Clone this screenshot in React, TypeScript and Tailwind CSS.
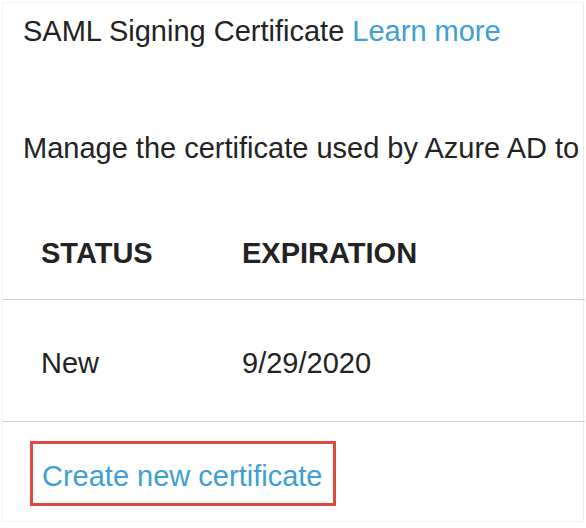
export default function App() {
  return (
    <div className="w-[586px] h-[528px] bg-white overflow-hidden font-['Liberation_Sans',Arial,sans-serif] text-[#232323]">
      <div className="h-[520px] ml-[2px] mt-[2px] mr-[2px] border border-[#f2f2f2] border-r-[#ececec]">
        <div className="pt-[12px] pl-[20px] text-[29px] leading-[33px] whitespace-nowrap">
          SAML Signing Certificate <span className="text-[#3d9fd3]">Learn more</span>
        </div>

        <div className="pt-[84px] pl-[20px] text-[29px] leading-[33px] whitespace-nowrap">
          Manage the certificate used by Azure AD to
        </div>

        <div className="mt-[72px] -mr-[2px]">
          <div className="flex pl-[38px] pb-[29px] border-b border-[#cfcfcf] text-[29px] leading-[33px] font-bold">
            <div className="w-[201px]">STATUS</div>
            <div>EXPIRATION</div>
          </div>
          <div className="flex pl-[38px] pt-[47px] pb-[41px] border-b border-[#cfcfcf] text-[29px] leading-[33px]">
            <div className="w-[201px]">New</div>
            <div>9/29/2020</div>
          </div>
        </div>

        <div className="pt-[19px] pl-[27px]">
          <div className="inline-block border-[3px] border-[#dc4a40] pt-[16px] pb-[10px] pl-[9px] pr-[11px] text-[29px] leading-[33px] text-[#3d9fd3] whitespace-nowrap">
            Create new certificate
          </div>
        </div>
      </div>
    </div>
  );
}
